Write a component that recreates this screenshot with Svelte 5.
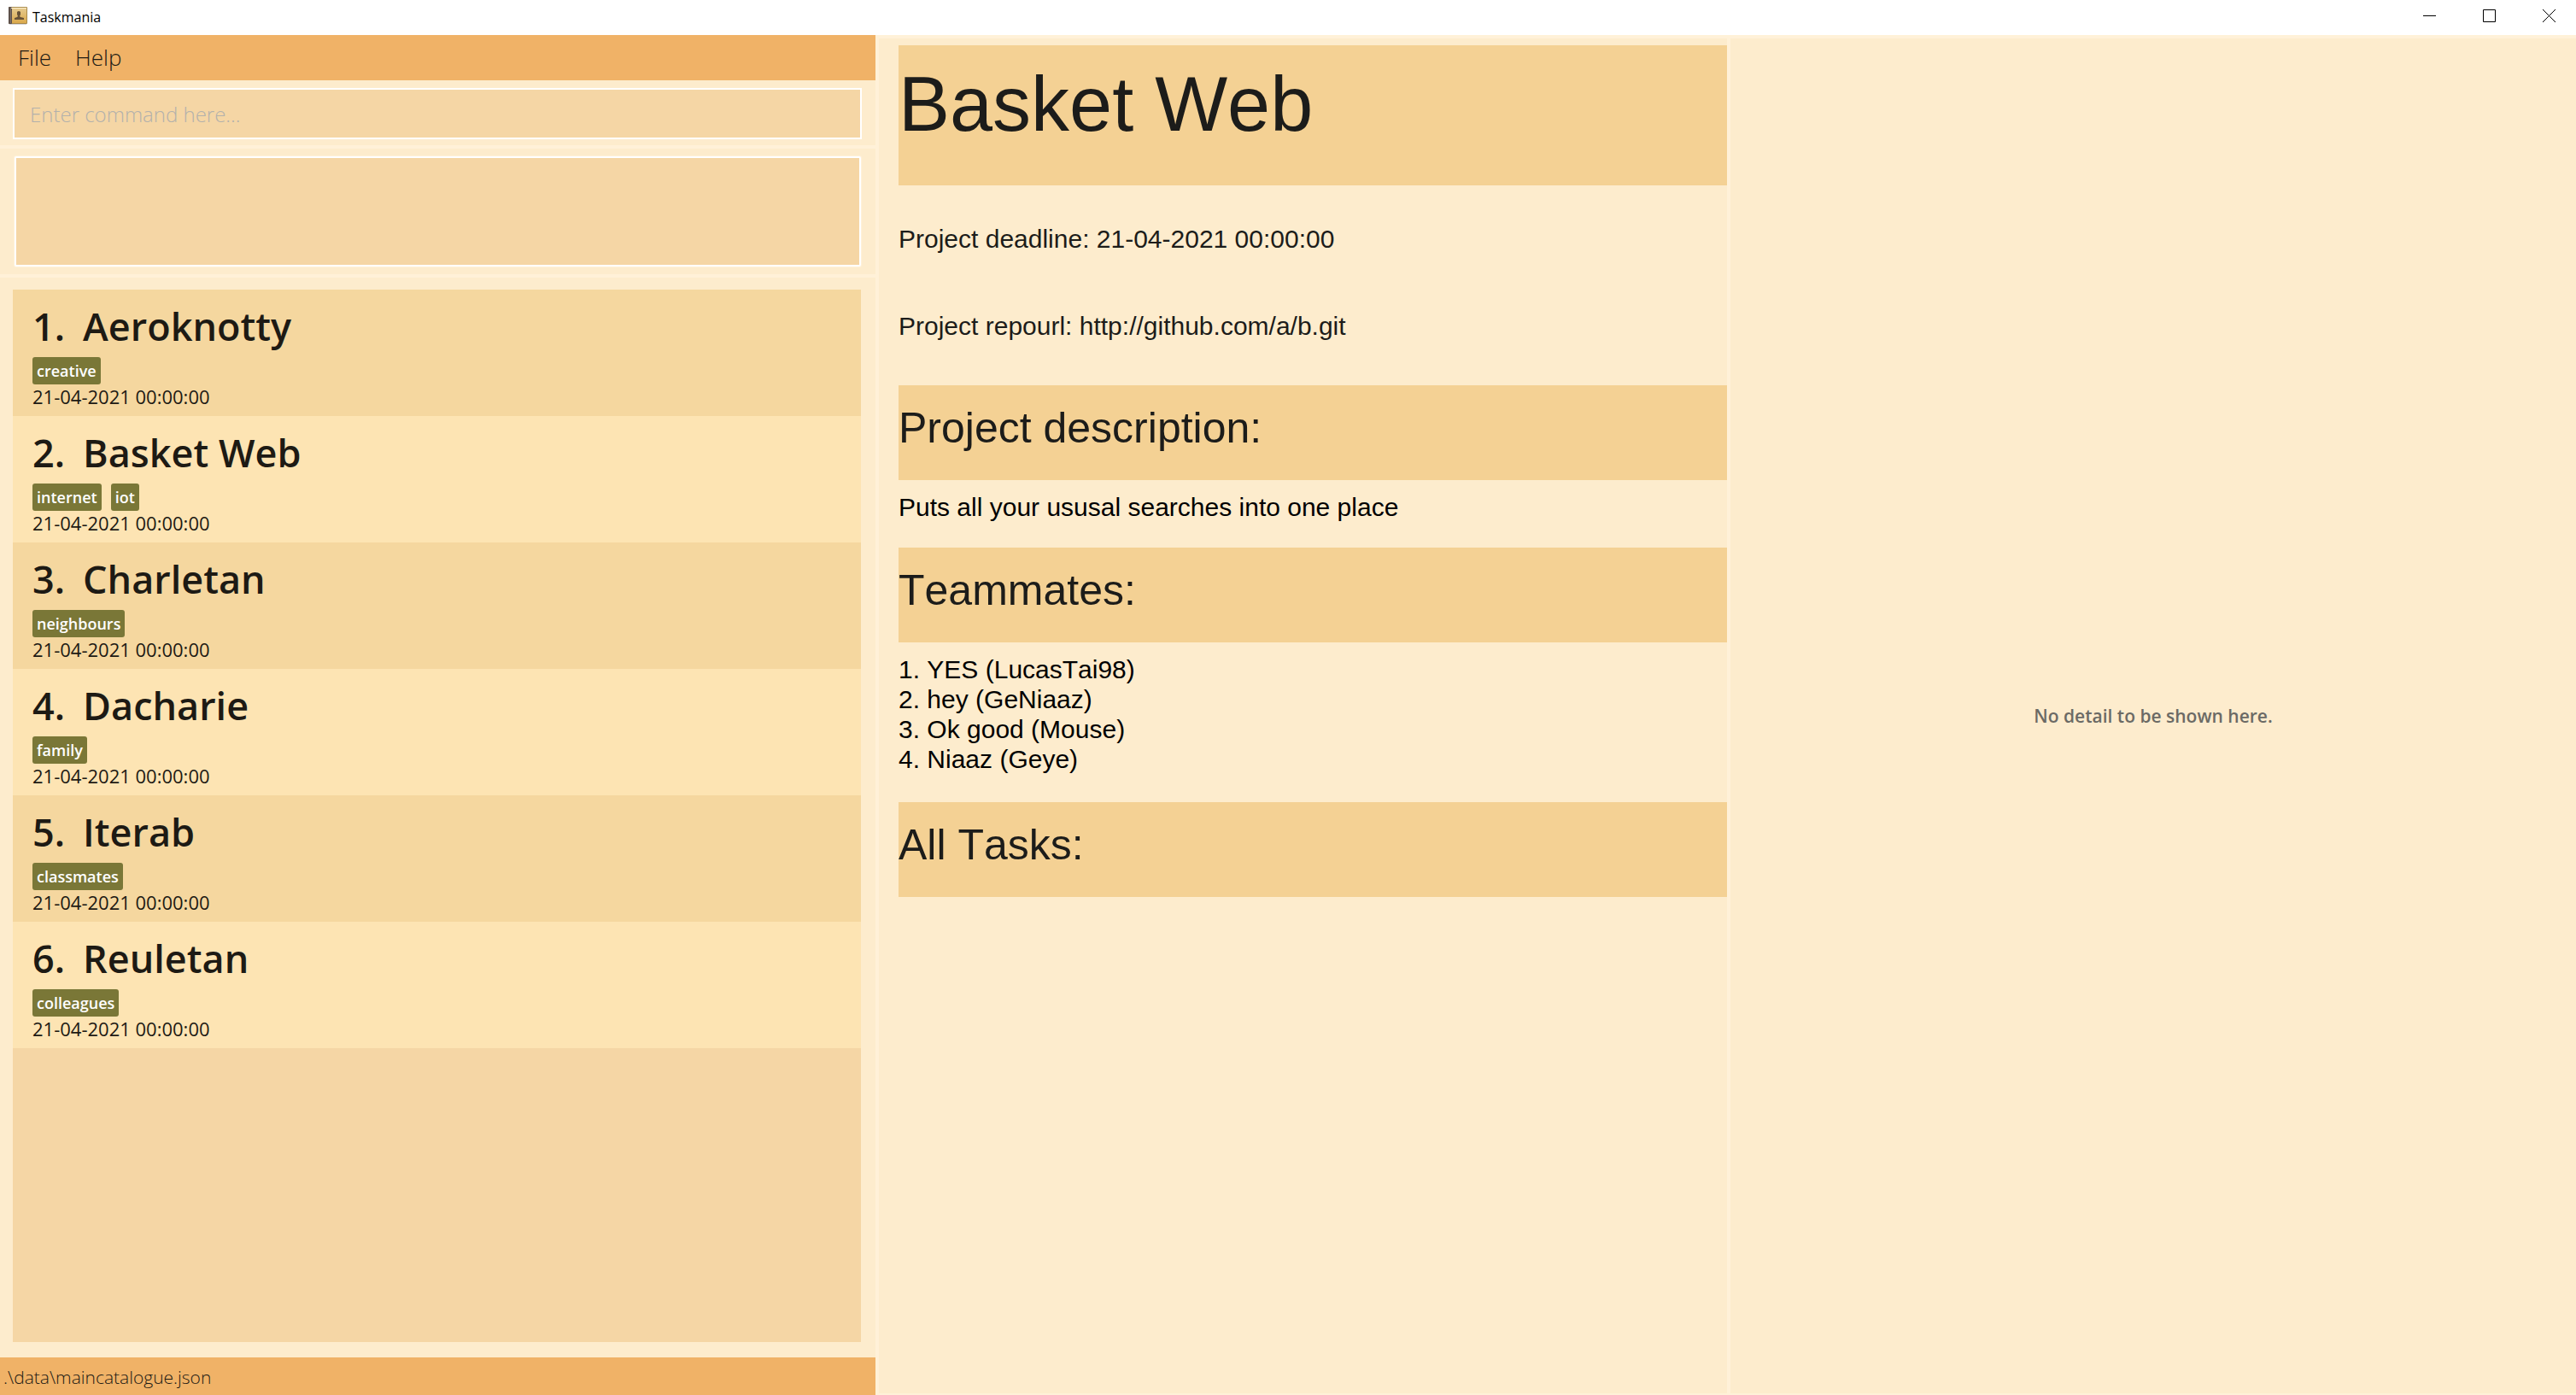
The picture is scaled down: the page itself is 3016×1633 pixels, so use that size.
<script>
  const projects = [
    { name: 'Aeroknotty', tags: ['creative'], deadline: '21-04-2021 00:00:00' },
    { name: 'Basket Web', tags: ['internet', 'iot'], deadline: '21-04-2021 00:00:00' },
    { name: 'Charletan', tags: ['neighbours'], deadline: '21-04-2021 00:00:00' },
    { name: 'Dacharie', tags: ['family'], deadline: '21-04-2021 00:00:00' },
    { name: 'Iterab', tags: ['classmates'], deadline: '21-04-2021 00:00:00' },
    { name: 'Reuletan', tags: ['colleagues'], deadline: '21-04-2021 00:00:00' }
  ];
  const teammates = ['YES (LucasTai98)', 'hey (GeNiaaz)', 'Ok good (Mouse)', 'Niaaz (Geye)'];
  let command = $state('');
</script>

<div class="window">
  <header class="titlebar">
    <svg class="logo" viewBox="0 0 22 21" aria-hidden="true">
      <defs>
        <linearGradient id="cover" x1="0" y1="0" x2="0" y2="1">
          <stop offset="0" stop-color="#e5c98c" />
          <stop offset="1" stop-color="#dba94c" />
        </linearGradient>
      </defs>
      <rect x="1" y="19" width="20" height="2" fill="#d5d5da" />
      <rect x="0" y="0" width="22" height="20" rx="1" fill="#a88a4c" />
      <rect x="0" y="0" width="4" height="20" rx="1" fill="#5d504a" />
      <rect x="2" y="1" width="1" height="18" fill="#7d706a" />
      <rect x="4" y="2" width="17" height="17" fill="url(#cover)" />
      <rect x="3" y="1" width="18" height="1" fill="#fff0cc" />
      <path d="M7 15v-2l3-1 1-1-1-2V6q2-2 4 0v3l-1 2 1 1 4 1v2z" fill="#675238" />
    </svg>
    <span class="app-name">Taskmania</span>
    <div class="controls">
      <button aria-label="Minimize"><svg viewBox="0 0 15 15"><path d="M0 7.5h15" /></svg></button>
      <button aria-label="Maximize"><svg viewBox="0 0 15 15"><path d="M.5 .5h14v14h-14z" /></svg></button>
      <button aria-label="Close"><svg viewBox="0 0 15 15"><path d="M0 0l15 15M15 0L0 15" /></svg></button>
    </div>
  </header>

  <main>
    <section class="left">
      <nav class="menubar">
        <button>File</button>
        <button>Help</button>
      </nav>
      <div class="command">
        <input aria-label="Command" placeholder="Enter command here..." bind:value={command} />
      </div>
      <div class="result">
        <textarea aria-label="Result" readonly></textarea>
      </div>
      <div class="list-pane">
        <ul class="projects">
          {#each projects as project, i}
            <li>
              <h2><span>{i + 1}.</span><span>{project.name}</span></h2>
              <div class="tags">
                {#each project.tags as tag}<span class="tag">{tag}</span>{/each}
              </div>
              <p>{project.deadline}</p>
            </li>
          {/each}
        </ul>
      </div>
      <footer>.\data\maincatalogue.json</footer>
    </section>

    <section class="detail">
      <h1>Basket Web</h1>
      <p class="fact">Project deadline: 21-04-2021 00:00:00</p>
      <p class="fact">Project repourl: http://github.com/a/b.git</p>
      <h2>Project description:</h2>
      <div class="body">Puts all your ususal searches into one place</div>
      <h2>Teammates:</h2>
      <div class="body team">
        {#each teammates as mate, i}
          <div>{i + 1}. {mate}</div>
        {/each}
      </div>
      <h2>All Tasks:</h2>
    </section>

    <section class="empty">
      <p>No detail to be shown here.</p>
    </section>
  </main>
</div>

<style>
  :global(body) {
    margin: 0;
  }
  .window {
    display: flex;
    flex-direction: column;
    height: 100vh;
    font-family: 'Open Sans', 'Noto Sans', sans-serif;
    color: #1d1a14;
    background: #fdeccd;
  }
  h1, h2, p, ul {
    margin: 0;
    padding: 0;
    font-weight: inherit;
  }
  button {
    border: 0;
    padding: 0;
    background: none;
    font: inherit;
    color: inherit;
  }
  .titlebar {
    display: flex;
    align-items: center;
    height: 41px;
    padding-left: 10px;
    box-sizing: border-box;
    background: #fff;
  }
  .logo {
    width: 22px;
    height: 21px;
    margin-right: 6px;
    padding-bottom: 4px;
  }
  .app-name {
    padding-bottom: 2px;
    font-size: 16px;
    color: #000;
  }
  .controls {
    display: flex;
    gap: 6px;
    margin-left: auto;
    height: 100%;
  }
  .controls button {
    width: 64px;
    padding-bottom: 4px;
    display: grid;
    place-items: center;
  }
  .controls svg {
    width: 15px;
    height: 15px;
    fill: none;
    stroke: #000;
    stroke-width: 1;
  }
  main {
    flex: 1;
    min-height: 0;
    display: grid;
    grid-template-columns: 1025fr 997fr 994fr;
  }
  .left {
    display: flex;
    flex-direction: column;
    min-height: 0;
  }
  .menubar {
    display: flex;
    gap: 28px;
    height: 53px;
    box-sizing: border-box;
    padding: 0 0 2px 21px;
    background: #f0b267;
    font-size: 26px;
    font-weight: 300;
  }
  .command {
    padding: 9px 16px 7px 15px;
    border-bottom: 4px solid #fff1d8;
  }
  input {
    display: block;
    width: 100%;
    height: 60px;
    box-sizing: border-box;
    padding: 0 18px;
    border: 2px solid #fff;
    border-radius: 0;
    background: #f5d6a5;
    font: 300 24px 'Open Sans', sans-serif;
    outline: none;
  }
  input::placeholder {
    color: #b3b1ac;
    opacity: 1;
  }
  .result {
    padding: 9px 17px 9px 17px;
    border-bottom: 4px solid #fff1d8;
  }
  textarea {
    display: block;
    width: 100%;
    height: 129px;
    box-sizing: border-box;
    border: 2px solid #fff;
    outline: none;
    box-shadow: 0 0 0 1px #fff1d8;
    border-radius: 2px;
    background: #f5d6a5;
    resize: none;
  }
  .list-pane {
    flex: 1;
    min-height: 0;
    display: flex;
    padding: 14px 17px 18px 15px;
  }
  .projects {
    flex: 1;
    background: #f5d6a5;
    list-style: none;
  }
  .projects li {
    height: 148px;
    box-sizing: border-box;
    padding: 11px 23px;
    background: #f5d79f;
  }
  .projects li:nth-child(even) {
    background: #fde4b3;
  }
  .projects h2 {
    display: flex;
    gap: 21px;
    height: 68px;
    line-height: 64px;
    font-size: 45px;
    font-weight: 600;
  }
  .tags {
    display: flex;
    gap: 11px;
  }
  .tag {
    height: 32px;
    line-height: 32px;
    padding: 0 5px;
    border-radius: 3px;
    background: #7a7737;
    color: #fff;
    font-size: 18px;
    font-weight: 600;
  }
  .projects p {
    font-size: 22px;
    line-height: 28px;
  }
  footer {
    height: 44px;
    line-height: 46px;
    padding-left: 4px;
    background: #f0b267;
    font-size: 21px;
    font-weight: 300;
  }
  .detail {
    border: 4px solid #fff1d8;
    border-right: 0;
    border-bottom-width: 2px;
    padding: 8px 0 0 23px;
    font-family: 'Liberation Sans', Arial, sans-serif;
    font-size: 30px;
    line-height: 35px;
    font-kerning: none;
    color: #1c1c1a;
  }
  .detail h1 {
    height: 164px;
    box-sizing: border-box;
    padding-top: 18px;
    line-height: 102px;
    font-size: 90px;
    background: #f4d194;
  }
  .fact {
    padding: 45px 0 22px;
  }
  .detail h2 {
    height: 111px;
    box-sizing: border-box;
    padding-top: 20px;
    line-height: 60px;
    font-size: 50px;
    background: #f4d194;
  }
  .fact + h2 {
    margin-top: 30px;
  }
  .body {
    padding: 14px 0 30px;
    color: #000;
  }
  .body.team {
    padding-bottom: 33px;
  }
  .empty {
    display: grid;
    place-items: center;
    border: 4px solid #fff1d8;
    border-right: 0;
    border-bottom-width: 2px;
    font-size: 21px;
    font-weight: 600;
    color: #6b6a65;
  }
</style>
